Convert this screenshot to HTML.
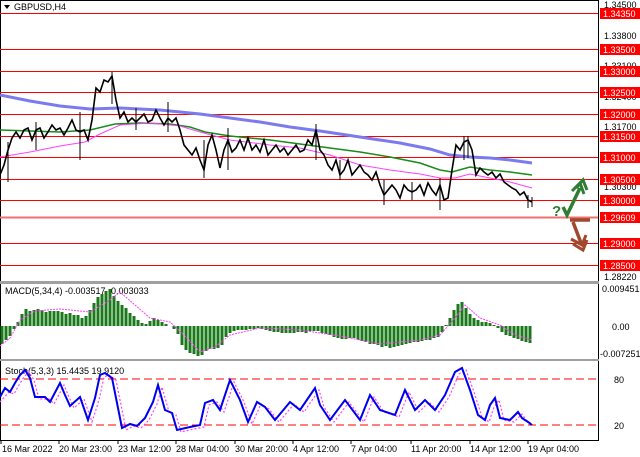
<!DOCTYPE html>
<html><head><meta charset="utf-8"><style>
body{margin:0;background:#fff;width:640px;height:457px;overflow:hidden;font-family:"Liberation Sans",sans-serif}
svg{display:block}
text{font-family:"Liberation Sans",sans-serif;font-size:9px}
</style></head><body>
<svg width="640" height="457" viewBox="0 0 640 457">
<rect width="640" height="457" fill="#fff"/>
<rect x="0.5" y="0.5" width="598" height="440" fill="none" stroke="#000"/>
<rect x="0" y="281" width="599" height="3" fill="#a0a0a0"/>
<rect x="0" y="359" width="599" height="2" fill="#a0a0a0"/>
<g stroke="#ff0000" stroke-width="1">
<line x1="0" y1="13.5" x2="598" y2="13.5"/>
<line x1="0" y1="49.5" x2="598" y2="49.5"/>
<line x1="0" y1="71.5" x2="598" y2="71.5"/>
<line x1="0" y1="92.5" x2="598" y2="92.5"/>
<line x1="0" y1="114.5" x2="598" y2="114.5"/>
<line x1="0" y1="136.5" x2="598" y2="136.5"/>
<line x1="0" y1="157.5" x2="598" y2="157.5"/>
<line x1="0" y1="179.5" x2="598" y2="179.5"/>
<line x1="0" y1="200.5" x2="598" y2="200.5"/>
<line x1="0" y1="217.5" x2="598" y2="217.5" stroke="#f07070" stroke-width="2"/>
<line x1="0" y1="243.5" x2="598" y2="243.5"/>
<line x1="0" y1="265.5" x2="598" y2="265.5"/>
</g>
<polyline fill="none" stroke="#7b7bee" stroke-width="3" points="0,95 30,101 60,106 90,109 120,108 160,110 200,114 230,118 260,122 290,127 320,131 360,137 400,143 430,149 450,155 470,157 490,158 510,160 532,163"/>
<polyline fill="none" stroke="#1a8a1a" stroke-width="1.5" points="0,130 30,131 60,132 90,130 115,124 140,123 170,124 190,127 205,132 230,136 270,140 300,144 330,148 360,152 390,157 420,163 440,170 452,172 470,167 490,170 510,172 532,175"/>
<polyline fill="none" stroke="#ff40ff" stroke-width="1" points="0,157 30,152 60,146 85,142 100,134 120,125 150,123 180,126 200,132 230,140 270,145 300,148 330,155 360,165 390,170 420,174 440,178 455,178 470,174 490,178 510,182 532,188"/>
<polyline fill="none" stroke="#000" stroke-width="1.6" points="0,175 4,165 8,150 12,138 16,132 20,138 24,130 28,128 32,140 36,130 40,128 44,138 48,132 52,125 56,130 60,128 64,135 68,128 72,120 76,130 80,132 84,130 88,140 92,120 96,88 100,92 104,80 108,82 112,76 116,100 120,118 124,112 128,122 132,118 136,122 140,118 144,114 148,122 152,120 156,110 160,118 164,125 168,118 172,122 176,118 180,130 184,145 188,150 192,155 196,148 200,160 204,170 208,145 212,135 216,150 220,168 224,150 228,140 232,152 236,148 240,140 244,150 248,138 252,150 256,145 260,152 264,140 268,155 272,150 276,145 280,152 284,148 288,155 292,150 296,145 300,152 304,150 308,140 312,145 316,130 320,150 324,155 328,165 332,170 336,160 340,175 344,170 348,160 352,175 356,170 360,165 364,172 368,175 372,180 376,172 380,185 384,195 388,190 392,185 396,190 400,198 404,185 408,190 412,192 416,190 420,185 424,195 428,183 432,190 436,195 440,185 444,200 448,198 452,170 456,145 460,150 464,142 468,140 472,150 476,175 480,168 484,172 488,175 492,172 496,178 500,174 504,182 508,185 512,188 516,190 520,195 524,192 528,200 532,202"/>
<g stroke="#000" stroke-width="1">
<path d="M8 142V182M36 122V150M80 112V160M112 72V104M136 108V130M168 102V132M204 140V178M228 128V170M316 124V160M340 160V180M384 180V205M412 182V200M440 178V210M464 136V160M468 136V158M528 195V208M532 197V207"/>
</g>
<!-- arrows -->
<text x="552" y="216" fill="#2e7d32" style="font-size:15px;font-weight:bold">?</text>
<path d="M563 207 L567 215 L580 188" fill="none" stroke="#2e7d32" stroke-width="3.5"/>
<path d="M572 191 L580 183 L584 194 M576 188 L583 180 L587 190" fill="none" stroke="#2e7d32" stroke-width="3"/>
<path d="M570 220 H590" stroke="#a0482d" stroke-width="3.5"/>
<path d="M573 222 L581 243" fill="none" stroke="#a0482d" stroke-width="3.5"/>
<path d="M571 239 L582 245 L586 235 M573 244 L583 250 L587 240" fill="none" stroke="#a0482d" stroke-width="3"/>
<path d="M4 5 L10 5 L7 9 Z" fill="#000"/>
<text x="14" y="10">GBPUSD,H4</text>
<g fill="#000">
<text x="604" y="8">1.34500</text>
<text x="604" y="39">1.33800</text>
<text x="604" y="69">1.33100</text>
<text x="604" y="100">1.32400</text>
<text x="604" y="130">1.31700</text>
<text x="604" y="190">1.30300</text>
<text x="604" y="249">1.28920</text>
<text x="604" y="280">1.28220</text>
<text x="602" y="292">0.009451</text>
<text x="612" y="330">0.00</text>
<text x="600" y="357">-0.007251</text>
<text x="614" y="383">80</text>
<text x="614" y="429">20</text>
</g>
<g fill="#ff0000">
<rect x="600" y="8" width="40" height="11"/><rect x="600" y="44" width="40" height="11"/><rect x="600" y="66" width="40" height="11"/><rect x="600" y="87" width="40" height="11"/><rect x="600" y="109" width="40" height="11"/><rect x="600" y="131" width="40" height="11"/><rect x="600" y="152" width="40" height="11"/><rect x="600" y="174" width="40" height="11"/><rect x="600" y="195" width="40" height="11"/><rect x="600" y="212" width="40" height="11"/><rect x="600" y="238" width="40" height="11"/><rect x="600" y="260" width="40" height="11"/>
</g>
<g fill="#fff">
<text x="603" y="17">1.34350</text><text x="603" y="53">1.33500</text><text x="603" y="75">1.33000</text><text x="603" y="96">1.32500</text><text x="603" y="118">1.32000</text><text x="603" y="140">1.31500</text><text x="603" y="161">1.31000</text><text x="603" y="183">1.30500</text><text x="603" y="204">1.30000</text><text x="603" y="221">1.29609</text><text x="603" y="247">1.29000</text><text x="603" y="269">1.28500</text>
</g>
<text x="5" y="294">MACD(5,34,4) -0.003517 -0.003033</text>
<path stroke="#1a7a1a" stroke-width="3" fill="none" d="M2 326V344M6 326V340M10 326V336M14 326V329M18 326V322M22 326V314M26 326V309M30 326V311M34 326V310M38 326V309M42 326V310M46 326V312M50 326V311M54 326V311M58 326V311M62 326V312M66 326V314M70 326V313M74 326V315M78 326V315M82 326V318M86 326V316M90 326V310M94 326V303M98 326V297M102 326V294M106 326V291M110 326V289M114 326V296M118 326V301M122 326V305M126 326V308M130 326V313M134 326V316M138 326V320M142 326V323M146 326V324M150 326V321M154 326V318M158 326V320M162 326V322M166 326V324M170 326V326M174 326V329M178 326V334M182 326V345M186 326V350M190 326V353M194 326V354M198 326V356M202 326V355M206 326V351M210 326V349M214 326V349M218 326V348M222 326V345M226 326V337M230 326V333M234 326V331M238 326V330M242 326V330M246 326V330M250 326V329M254 326V329M258 326V328M262 326V329M266 326V330M270 326V331M274 326V332M278 326V332M282 326V333M286 326V333M290 326V333M294 326V333M298 326V332M302 326V332M306 326V333M310 326V331M314 326V331M318 326V331M322 326V333M326 326V334M330 326V335M334 326V337M338 326V338M342 326V339M346 326V339M350 326V338M354 326V338M358 326V340M362 326V341M366 326V342M370 326V344M374 326V344M378 326V345M382 326V347M386 326V346M390 326V348M394 326V347M398 326V346M402 326V345M406 326V344M410 326V343M414 326V342M418 326V342M422 326V341M426 326V340M430 326V340M434 326V338M438 326V337M442 326V332M446 326V325M450 326V318M454 326V310M458 326V304M462 326V302M466 326V308M470 326V314M474 326V318M478 326V320M482 326V322M486 326V322M490 326V323M494 326V325M498 326V328M502 326V332M506 326V335M510 326V336M514 326V338M518 326V339M522 326V341M526 326V342M530 326V343"/>
<polyline fill="none" stroke="#ff40ff" stroke-width="1" stroke-dasharray="2,1" points="0,346 10,338 20,320 35,311 60,309 90,312 110,300 120,292 135,305 150,318 170,322 185,336 200,352 215,347 230,335 260,328 300,330 340,336 380,344 420,340 440,335 455,318 465,305 480,318 500,325 515,335 532,340"/>
<text x="5" y="374">Stoch(5,3,3) 15.4435 19.9120</text>
<line x1="0" y1="379" x2="598" y2="379" stroke="#ff0000" stroke-dasharray="8,4"/>
<line x1="0" y1="425" x2="598" y2="425" stroke="#ff0000" stroke-dasharray="8,4"/>
<polyline fill="none" stroke="#ff40ff" stroke-width="1.2" stroke-dasharray="2,2" points="0,402 9,392 14,394 19,385 24,377 29,372 34,380 39,399 44,399 49,399 54,404 64,385 69,397 74,408 84,399 92,422 99,400 104,377 109,375 116,380 126,430 134,426 141,428 149,420 157,404 162,387 169,412 176,415 181,432 194,429 204,427 209,405 217,402 224,412 234,382 244,402 252,424 261,404 269,409 279,422 294,404 304,412 319,390 324,407 334,422 349,402 364,422 374,397 384,412 399,417 409,392 419,412 429,402 439,412 449,397 459,374 466,370 474,392 482,417 489,422 494,407 499,400 504,420 514,422 522,414 526,420 532,424"/>
<polyline fill="none" stroke="#0000ee" stroke-width="2" points="0,397 5,388 10,392 15,383 20,375 25,370 30,378 35,397 40,397 45,397 50,402 60,383 65,395 70,406 80,397 88,420 95,398 100,375 105,373 112,378 122,428 130,424 137,426 145,418 153,402 158,385 165,410 172,413 177,430 190,427 200,425 205,403 213,400 220,410 230,380 240,400 248,422 257,402 265,407 275,420 290,402 300,410 315,388 320,405 330,420 345,400 360,420 370,395 380,410 395,415 405,390 415,410 425,400 435,410 445,395 455,372 462,368 470,390 478,415 485,420 490,405 495,398 500,418 510,420 518,412 522,418 528,422 532,425"/>
<g fill="#000">
<text x="2" y="452">16 Mar 2022</text>
<text x="59" y="452">20 Mar 23:00</text>
<text x="118" y="452">23 Mar 12:00</text>
<text x="176" y="452">28 Mar 04:00</text>
<text x="235" y="452">30 Mar 20:00</text>
<text x="293" y="452">4 Apr 12:00</text>
<text x="351" y="452">7 Apr 04:00</text>
<text x="411" y="452">11 Apr 20:00</text>
<text x="470" y="452">14 Apr 12:00</text>
<text x="528" y="452">19 Apr 04:00</text>
</g>
<g stroke="#000"><path d="M1 441v3M59 441v3M118 441v3M176 441v3M235 441v3M293 441v3M351 441v3M411 441v3M470 441v3M528 441v3"/></g>
</svg>
</body></html>
